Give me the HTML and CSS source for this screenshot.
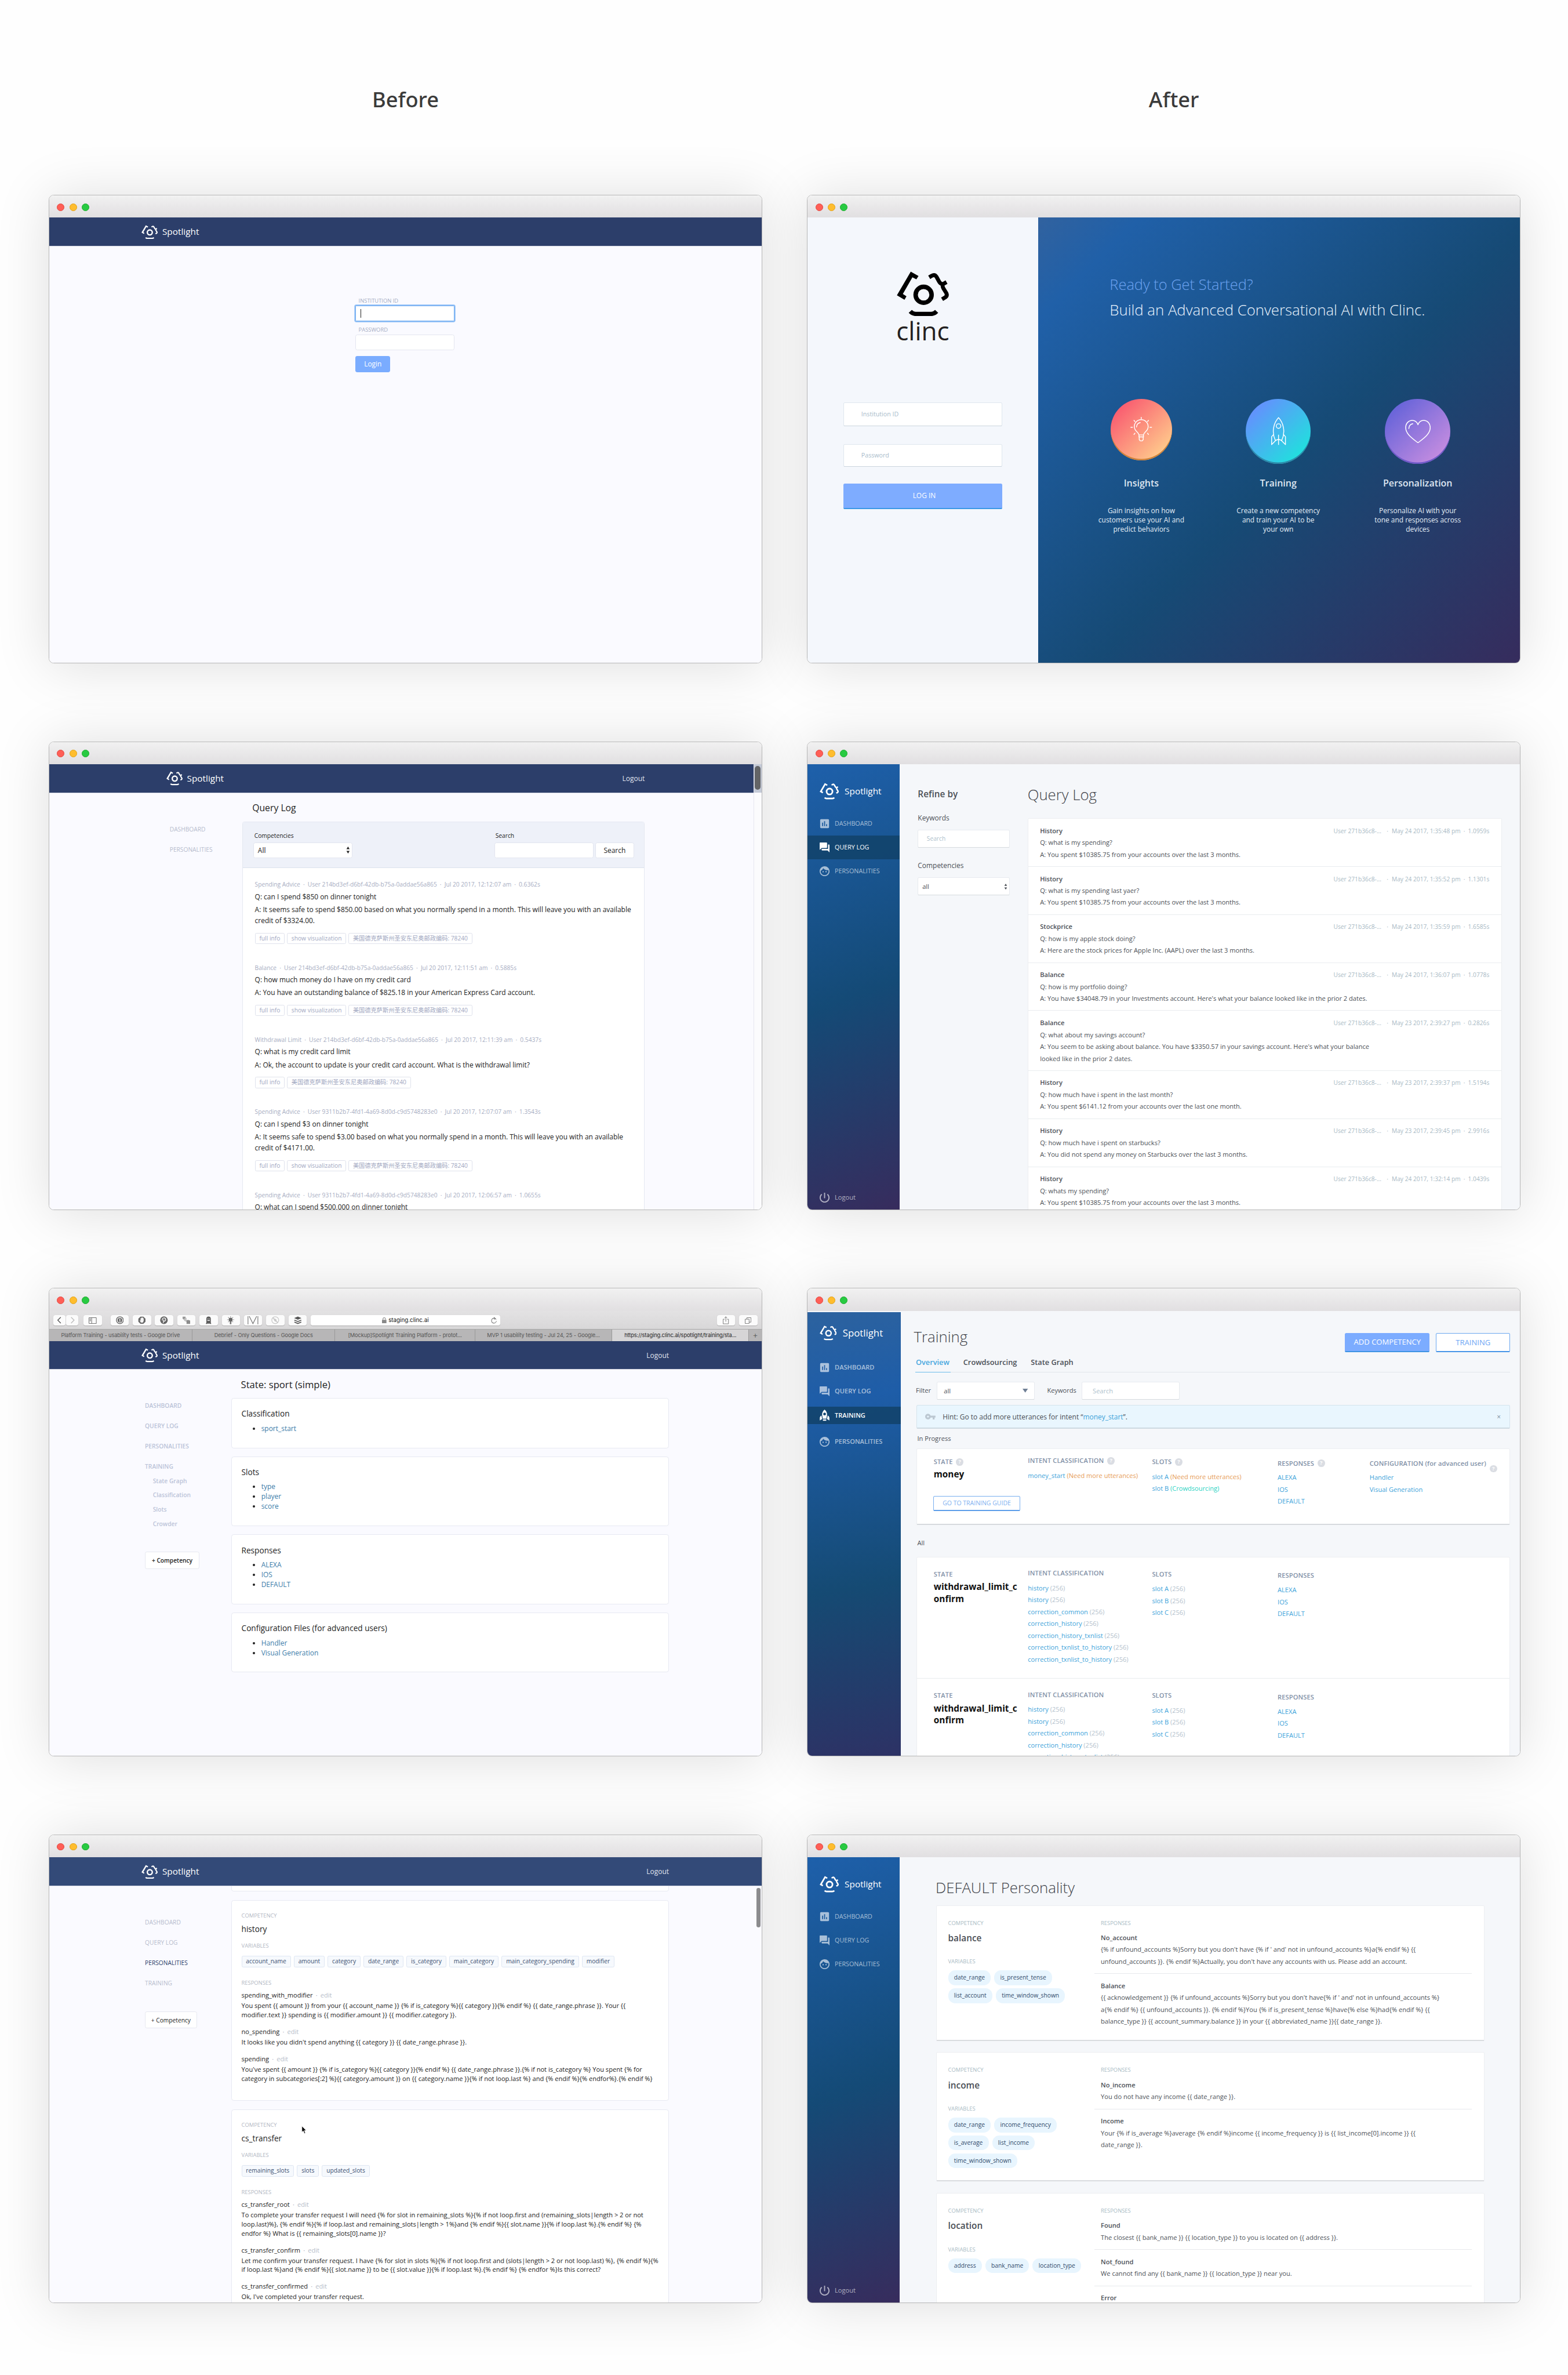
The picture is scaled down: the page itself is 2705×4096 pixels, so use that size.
FILE: index.html
```html
<!DOCTYPE html>
<html lang="en">
<head>
<meta charset="utf-8">
<title>Spotlight: Before and After</title>
<link rel="stylesheet" href="styles.css">
</head>
<body>
<svg width="0" height="0" class="defs" aria-hidden="true">
  <symbol id="mark" viewBox="100 85 318 273">
    <path fill="currentColor" d="M185 87L232 113L219 133L195 121L137 222L159 236L147 257L101 230Z"/>
    <g fill="none" stroke="currentColor" stroke-width="24">
      <path d="M297 121L312 112Q330 102 341 118L357 147Q366 163 381 162L402 150M381 162Q374 172 384 190L401 217Q408 233 395 242L375 254"/>
      <circle cx="263" cy="227" r="48.500" stroke-width="27"/>
      <path stroke-width="26" d="M182 328Q196 343 214 343H310Q328 343 342 328"/>
    </g>
  </symbol>
  <symbol id="i-dash" viewBox="2 2 20 20"><path fill="currentColor" d="M19 3H5c-1.100 0-2 .9-2 2v14c0 1.100.9 2 2 2h14c1.100 0 2-.9 2-2V5c0-1.100-.9-2-2-2zM9 17H7v-7h2v7zm4 0h-2V7h2v10zm4 0h-2v-4h2v4z"/></symbol>
  <symbol id="i-log" viewBox="2 2 20 20"><path fill="currentColor" d="M21 6h-2v9H6v2c0 .55.45 1 1 1h11l4 4V7c0-.55-.45-1-1-1zm-4 6V3c0-.55-.45-1-1-1H3c-.55 0-1 .45-1 1v14l4-4h10c.55 0 1-.45 1-1z"/></symbol>
  <symbol id="i-face" viewBox="2 2 20 20"><path fill="currentColor" d="M9 11.750c-.69 0-1.250.56-1.250 1.250s.56 1.250 1.250 1.250 1.250-.56 1.250-1.250-.56-1.250-1.250-1.250zm6 0c-.69 0-1.250.56-1.250 1.250s.56 1.250 1.250 1.250 1.250-.56 1.250-1.250-.56-1.250-1.250-1.250zM12 2C6.480 2 2 6.480 2 12s4.480 10 10 10 10-4.480 10-10S17.520 2 12 2zm0 18c-4.410 0-8-3.590-8-8 0-.29.02-.58.05-.86 2.360-1.050 4.230-2.980 5.210-5.370C11.070 8.330 14.050 10 17.420 10c.78 0 1.530-.09 2.250-.26.21.71.33 1.470.33 2.260 0 4.410-3.590 8-8 8z"/></symbol>
  <symbol id="i-power" viewBox="3 3 18 18"><path fill="currentColor" d="M13 3h-2v10h2V3zm4.830 2.170l-1.420 1.420C17.990 7.860 19 9.810 19 12c0 3.870-3.130 7-7 7s-7-3.130-7-7c0-2.190 1.010-4.140 2.580-5.420L6.170 5.170C4.230 6.820 3 9.260 3 12c0 4.970 4.030 9 9 9s9-4.030 9-9c0-2.740-1.230-5.180-3.170-6.830z"/></symbol>
  <symbol id="i-rocket" viewBox="0 0 20 23"><path fill="currentColor" fill-rule="evenodd" d="M10 0C13.500 2.500 15.500 7 15 11.500L13.500 18.500H6.500L5 11.500C4.500 7 6.500 2.500 10 0ZM10 6.200a2.800 2.800 0 1 0 0 5.600a2.800 2.800 0 1 0 0-5.600ZM3.600 12L5.200 19L.3 22V16.500Q.5 13.500 3.600 12ZM16.400 12L14.800 19L19.700 22V16.500Q19.500 13.500 16.400 12ZM6.600 20H13.400V22.800H6.600Z"/></symbol>
  <symbol id="i-key" viewBox="1 6 22 12"><path fill="currentColor" d="M12.650 10C11.830 7.670 9.610 6 7 6c-3.310 0-6 2.690-6 6s2.690 6 6 6c2.610 0 4.830-1.670 5.650-4H17v4h4v-4h2v-4H12.650zM7 14c-1.100 0-2-.9-2-2s.9-2 2-2 2 .9 2 2-.9 2-2 2z"/></symbol>
  <symbol id="i-updown" viewBox="0 0 8 14"><path fill="currentColor" d="M4 0L7.200 5.200H.8ZM4 14L.8 8.800H7.200Z"/></symbol>
</svg>

<main class="board">
  <div class="heads"><h1>Before</h1><h1>After</h1></div>
  <div class="windows">

    <!-- Login, before -->
    <section class="win">
      <div class="bar"><i></i><i></i><i></i></div>
      <div class="page legacy">
        <header class="top"><svg class="mark"><use href="#mark"/></svg><span class="brand">Spotlight</span></header>
        <form class="old-login">
          <label>INSTITUTION ID</label>
          <div class="field focus"><b></b></div>
          <label>PASSWORD</label>
          <div class="field"></div>
          <div class="btn">Login</div>
        </form>
      </div>
    </section>

    <!-- Login, after -->
    <section class="win">
      <div class="bar"><i></i><i></i><i></i></div>
      <div class="page split">
        <div class="signin">
          <svg class="logo"><use href="#mark"/></svg>
          <div class="wordmark">clinc</div>
          <div class="inp a">Institution ID</div>
          <div class="inp b">Password</div>
          <div class="go">LOG IN</div>
        </div>
        <div class="hero">
          <p class="ready">Ready to Get Started?</p>
          <p class="build">Build an Advanced Conversational AI with Clinc.</p>
          <div class="feats">
            <div class="feat">
              <div class="disc"><div class="orb sun">
                <svg width="44" height="52" viewBox="0 0 44 52" fill="none" stroke="#fff" stroke-width="1.700" stroke-linecap="round"><path d="M17.500 36.500C17 31 8 29 8 19.500a14 14 0 0 1 28 0C36 29 27 31 26.500 36.500ZM17.500 36.500V40.500H26.500V36.500M18 40.500V46L20 48.500H24L26 46V40.500M12.500 20.500Q13 13 20 11.500M22 .9V4.200M1 21H4.300M39.700 21H43M7.300 7L9.300 9.300M36.700 7L34.700 9.300M7.300 35.500L9.300 33M36.700 35.500L34.700 33"/></svg>
              </div></div>
              <h3>Insights</h3>
              <p>Gain insights on how<br>customers use your AI and<br>predict behaviors</p>
            </div>
            <div class="feat">
              <div class="disc"><div class="orb sea">
                <svg width="32" height="58" viewBox="0 0 32 58" fill="none" stroke="#fff" stroke-width="1.700" stroke-linejoin="round"><path d="M16 1.500C25 11 31 29 22.500 47.500L16 45.500L9.500 47.500C1 29 7 11 16 1.500ZM5.500 36L2 40V56L11 47M26.500 36L30 40V56L21 47M16 36V56.500"/><circle cx="16" cy="18.500" r="4.600"/></svg>
              </div></div>
              <h3>Training</h3>
              <p>Create a new competency<br>and train your AI to be<br>your own</p>
            </div>
            <div class="feat">
              <div class="disc"><div class="orb dusk">
                <svg width="52" height="48" viewBox="0 0 52 48" fill="none" stroke="#fff" stroke-width="1.800" stroke-linecap="round" stroke-linejoin="round"><path d="M26 46.500C15 38 1.200 29 1.200 15.500C1.200 7 7.500 1.200 14.500 1.200C20 1.200 24 4.500 26 10C28 4.500 32 1.200 37.500 1.200C44.500 1.200 50.800 7 50.800 15.500C50.800 29 37 38 26 46.500ZM7.500 17.500Q8 9.500 15.500 8"/></svg>
              </div></div>
              <h3>Personalization</h3>
              <p>Personalize AI with your<br>tone and responses across<br>devices</p>
            </div>
          </div>
        </div>
      </div>
    </section>

    <!-- Query log, before -->
    <section class="win">
      <div class="bar"><i></i><i></i><i></i></div>
      <div class="page legacy scrolls">
        <div class="viewport">
          <header class="top inset"><svg class="mark"><use href="#mark"/></svg><span class="brand">Spotlight</span><span class="out">Logout</span></header>
          <div class="cols inset">
            <nav class="side"><a>DASHBOARD</a><a>PERSONALITIES</a></nav>
            <div class="main ql">
              <h2>Query Log</h2>
              <div class="panel">
                <div class="filters">
                  <div><label>Competencies</label><div class="box sel">All<svg width="8" height="14"><use href="#i-updown"/></svg></div></div>
                  <div><label>Search</label><div class="pair"><div class="box"></div><div class="box sb">Search</div></div></div>
                </div>
                <div class="entries">
                  <article><p class="meta">Spending Advice<i>·</i>User 214bd3ef-d6bf-42db-b75a-0addae56a865<i>·</i>Jul 20 2017, 12:12:07 am<i>·</i>0.6362s</p><p>Q: can I spend $850 on dinner tonight</p><p class="ans">A: It seems safe to spend $850.00 based on what you normally spend in a month. This will leave you with an available<br>credit of $3324.00.</p><div class="tags"><span>full info</span><span>show visualization</span><span>美国德克萨斯州圣安东尼奥邮政编码: 78240</span></div></article>
                  <article><p class="meta">Balance<i>·</i>User 214bd3ef-d6bf-42db-b75a-0addae56a865<i>·</i>Jul 20 2017, 12:11:51 am<i>·</i>0.5885s</p><p>Q: how much money do I have on my credit card</p><p class="ans">A: You have an outstanding balance of $825.18 in your American Express Card account.</p><div class="tags"><span>full info</span><span>show visualization</span><span>美国德克萨斯州圣安东尼奥邮政编码: 78240</span></div></article>
                  <article><p class="meta">Withdrawal Limit<i>·</i>User 214bd3ef-d6bf-42db-b75a-0addae56a865<i>·</i>Jul 20 2017, 12:11:39 am<i>·</i>0.5437s</p><p>Q: what is my credit card limit</p><p class="ans">A: Ok, the account to update is your credit card account. What is the withdrawal limit?</p><div class="tags"><span>full info</span><span>美国德克萨斯州圣安东尼奥邮政编码: 78240</span></div></article>
                  <article><p class="meta">Spending Advice<i>·</i>User 9311b2b7-4fd1-4a69-8d0d-c9d5748283e0<i>·</i>Jul 20 2017, 12:07:07 am<i>·</i>1.3543s</p><p>Q: can I spend $3 on dinner tonight</p><p class="ans">A: It seems safe to spend $3.00 based on what you normally spend in a month. This will leave you with an available<br>credit of $4171.00.</p><div class="tags"><span>full info</span><span>show visualization</span><span>美国德克萨斯州圣安东尼奥邮政编码: 78240</span></div></article>
                  <article><p class="meta">Spending Advice<i>·</i>User 9311b2b7-4fd1-4a69-8d0d-c9d5748283e0<i>·</i>Jul 20 2017, 12:06:57 am<i>·</i>1.0655s</p><p>Q: what can I spend $500,000 on dinner tonight</p></article>
                </div>
              </div>
            </div>
          </div>
        </div>
        <div class="track"><b></b></div>
      </div>
    </section>

    <!-- Query log, after -->
    <section class="win">
      <div class="bar"><i></i><i></i><i></i></div>
      <div class="page modern">
        <nav class="rail">
          <div class="id"><svg class="mark"><use href="#mark"/></svg><span>Spotlight</span></div>
          <a><svg><use href="#i-dash"/></svg>DASHBOARD</a>
          <a class="on"><svg><use href="#i-log"/></svg>QUERY LOG</a>
          <a><svg><use href="#i-face"/></svg>PERSONALITIES</a>
          <a class="bye"><svg><use href="#i-power"/></svg>Logout</a>
        </nav>
        <aside class="refine">
          <h3>Refine by</h3>
          <label>Keywords</label><div class="ctl ph">Search</div>
          <label>Competencies</label><div class="ctl sel">all<svg width="7" height="12"><use href="#i-updown"/></svg></div>
        </aside>
        <div class="log">
          <h2>Query Log</h2>
          <div class="sheet">
            <div class="row"><div><b>History</b><br>Q: what is my spending?<br>A: You spent $10385.75 from your accounts over the last 3 months.</div><span>User 271b36c8-...<i>·</i>May 24 2017, 1:35:48 pm<em>·</em>1.0959s</span></div>
            <div class="row"><div><b>History</b><br>Q: what is my spending last yaer?<br>A: You spent $10385.75 from your accounts over the last 3 months.</div><span>User 271b36c8-...<i>·</i>May 24 2017, 1:35:52 pm<em>·</em>1.1301s</span></div>
            <div class="row"><div><b>Stockprice</b><br>Q: how is my apple stock doing?<br>A: Here are the stock prices for Apple Inc. (AAPL) over the last 3 months.</div><span>User 271b36c8-...<i>·</i>May 24 2017, 1:35:59 pm<em>·</em>1.6585s</span></div>
            <div class="row"><div><b>Balance</b><br>Q: how is my portfolio doing?<br>A: You have $34048.79 in your Investments account. Here's what your balance looked like in the prior 2 dates.</div><span>User 271b36c8-...<i>·</i>May 24 2017, 1:36:07 pm<em>·</em>1.0778s</span></div>
            <div class="row"><div><b>Balance</b><br>Q: what about my savings account?<br>A: You seem to be asking about balance. You have $3350.57 in your savings account. Here's what your balance<br>looked like in the prior 2 dates.</div><span>User 271b36c8-...<i>·</i>May 23 2017, 2:39:27 pm<em>·</em>0.2826s</span></div>
            <div class="row"><div><b>History</b><br>Q: how much have i spent in the last month?<br>A: You spent $6141.12 from your accounts over the last one month.</div><span>User 271b36c8-...<i>·</i>May 23 2017, 2:39:37 pm<em>·</em>1.5194s</span></div>
            <div class="row"><div><b>History</b><br>Q: how much have i spent on starbucks?<br>A: You did not spend any money on Starbucks over the last 3 months.</div><span>User 271b36c8-...<i>·</i>May 23 2017, 2:39:45 pm<em>·</em>2.9916s</span></div>
            <div class="row"><div><b>History</b><br>Q: whats my spending?<br>A: You spent $10385.75 from your accounts over the last 3 months.</div><span>User 271b36c8-...<i>·</i>May 24 2017, 1:32:14 pm<em>·</em>1.0439s</span></div>
          </div>
        </div>
      </div>
    </section>

    <!-- State detail, before -->
    <section class="win">
      <div class="bar"><i></i><i></i><i></i></div>
      <div class="safari">
        <div class="tool">
          <div class="k nav"><svg width="10" height="14" viewBox="0 0 10 14"><path d="M8 1L2 7L8 13" fill="none" stroke="#555" stroke-width="1.600"/></svg></div>
          <div class="k nav"><svg width="10" height="14" viewBox="0 0 10 14"><path d="M2 1L8 7L2 13" fill="none" stroke="#bbb" stroke-width="1.600"/></svg></div>
          <div class="k sb"><svg width="16" height="13" viewBox="0 0 16 13"><path d="M.6 .6H15.400V12.400H.6ZM6 .6V12.400M2 3H4.500M2 5H4.500M2 7H4.500" fill="none" stroke="#666" stroke-width="1.100"/></svg></div>
          <div class="k"><svg viewBox="0 0 16 16"><circle cx="8" cy="8" r="7" fill="none" stroke="#666" stroke-width="1.600"/><circle cx="8" cy="8" r="4.600" fill="#666"/><path d="M8 5V11M7 5.600H8M8 10.600H9" stroke="#fff" stroke-width="1.500"/></svg></div>
          <div class="k"><svg viewBox="0 0 16 16"><path d="M5 .8H11L15.200 5V11L11 15.200H5L.8 11V5Z" fill="#666"/><path d="M5.200 4V9L4 8.200L3.600 9.200L6 12.800H10L11.600 9.500V4.500H10.600V3H9V2.500H7.500V3.300H6.400V4Z" fill="#f4f4f4"/></svg></div>
          <div class="k"><svg viewBox="0 0 16 16"><circle cx="8" cy="8" r="7.700" fill="#666"/><path d="M6.500 13.500L8 6.500M5.200 8.800C3.500 5.500 6 3.400 8.200 3.400C12.500 3.400 12.500 10 8.800 10C7.800 10 7.200 9.300 7.200 9" fill="none" stroke="#fff" stroke-width="1.500"/></svg></div>
          <div class="k"><svg viewBox="0 0 16 16"><path d="M0 1H6V6L4 8L0 5Z" fill="#999"/><path d="M3 5L8 3V9L13 12H9L3 9Z" fill="#c2c2c2"/><path d="M8 8L12 7.500L16 9V15.500H8Z" fill="#8c8c8c"/></svg></div>
          <div class="k"><svg viewBox="0 0 16 16"><path d="M3.500 13V5A4.500 4.500 0 0 1 12.500 5V13L13.500 15.500H10.500L9.500 14.500L8 15.500L6.500 14.500L5.500 15.500H2.500Z" fill="#5d5d5d"/><path d="M6 4.800H7.200V6.300H6ZM8.800 4.800H10V6.300H8.800ZM5.500 8H10.500V9.400H5.500Z" fill="#fff"/></svg></div>
          <div class="k"><svg viewBox="0 0 16 16"><circle cx="8" cy="7" r="4" fill="#666"/><path d="M6.500 10H9.500V16H6.500Z" fill="#777"/><path d="M8 0V2M1 7H3M13 7H15M3 2L4.500 3.500M13 2L11.500 3.500M3 12L4.500 10.500M13 12L11.500 10.500" stroke="#888" stroke-width="1.200"/></svg></div>
          <div class="k"><svg width="22" height="17" viewBox="0 0 22 17" class="wide"><path d="M1 17V0M21 17V0M3.500 0L11 15L18.500 0" fill="none" stroke="#666" stroke-width="1.200"/></svg></div>
          <div class="k"><svg viewBox="0 0 16 16"><circle cx="8" cy="8" r="7" fill="none" stroke="#ccc" stroke-width="1.600"/><path d="M3 3L13 13" stroke="#c4c4c4" stroke-width="1.600"/><path d="M5 5Q9 4 11 8L9 11Q5 10 5 5Z" fill="#c9c9c9"/></svg></div>
          <div class="k"><svg viewBox="0 0 16 16"><path d="M8 .5L15.500 3.800L8 7L.5 3.800Z" fill="#555"/><path d="M1 7.800L8 10.800L15 7.800M1 11.800L8 14.800L15 11.800" fill="none" stroke="#555" stroke-width="1.900"/></svg></div>
          <div class="addr"><svg width="9" height="12" viewBox="0 0 9 12"><path d="M0 5H9V12H0Z" fill="#888"/><path d="M2 5V3.200A2.500 2.500 0 0 1 7 3.200V5" fill="none" stroke="#888" stroke-width="1.200"/></svg><span>staging.clinc.ai</span><svg class="reload" width="12" height="14" viewBox="0 0 12 14"><path d="M10.500 5.500A5 5 0 1 0 11 8.500M6 1L9 3.500L6 5.500" fill="none" stroke="#777" stroke-width="1.200"/></svg></div>
          <div class="k sh"><svg width="12" height="16" viewBox="0 0 12 16" class="wide"><path d="M3.500 6H.6V15.400H11.400V6H8.500M6 11V1M3.500 3.500L6 1L8.500 3.500" fill="none" stroke="#777" stroke-width="1.100"/></svg></div>
          <div class="k"><svg width="13" height="13" viewBox="0 0 13 13" class="wide"><path d="M.6 3.600H8.600V12.400H.6ZM4 3.600V.6H12.400V9.600H8.600" fill="none" stroke="#777" stroke-width="1.100"/></svg></div>
        </div>
        <div class="tabs"><span>Platform Training - usability tests - Google Drive</span><span>Debrief - Only Questions - Google Docs</span><span>[Mockup]Spotlight Training Platform - protot...</span><span>MVP 1 usability testing - Jul 24, 25 - Google...</span><span class="on">https://staging.clinc.ai/spotlight/training/sta...</span><span class="plus">+</span></div>
      </div>
      <div class="page legacy">
        <header class="top"><svg class="mark"><use href="#mark"/></svg><span class="brand">Spotlight</span><span class="out">Logout</span></header>
        <div class="cols">
          <nav class="side semi"><a>DASHBOARD</a><a>QUERY LOG</a><a>PERSONALITIES</a><a>TRAINING</a><a class="sub">State Graph</a><a class="sub">Classification</a><a class="sub">Slots</a><a class="sub">Crowder</a><div class="add">+ Competency</div></nav>
          <div class="main state">
            <h2>State: sport (simple)</h2>
            <div class="card"><h3>Classification</h3><ul><li><a>sport_start</a></li></ul></div>
            <div class="card"><h3>Slots</h3><ul><li><a>type</a></li><li><a>player</a></li><li><a>score</a></li></ul></div>
            <div class="card"><h3>Responses</h3><ul><li><a>ALEXA</a></li><li><a>IOS</a></li><li><a>DEFAULT</a></li></ul></div>
            <div class="card"><h3>Configuration Files (for advanced users)</h3><ul><li><a>Handler</a></li><li><a>Visual Generation</a></li></ul></div>
          </div>
        </div>
      </div>
    </section>

    <!-- Training, after -->
    <section class="win">
      <div class="bar"><i></i><i></i><i></i></div>
      <div class="page modern tr">
        <nav class="rail">
          <div class="id"><svg class="mark"><use href="#mark"/></svg><span>Spotlight</span></div>
          <a><svg><use href="#i-dash"/></svg>DASHBOARD</a>
          <a><svg><use href="#i-log"/></svg>QUERY LOG</a>
          <a class="on"><svg><use href="#i-rocket"/></svg>TRAINING</a>
          <a><svg><use href="#i-face"/></svg>PERSONALITIES</a>
        </nav>
        <div class="train">
          <div class="hd"><h2>Training</h2><div class="btns"><span class="fill">ADD COMPETENCY</span><span class="line">TRAINING</span></div></div>
          <div class="tabline"><span class="on">Overview</span><span>Crowdsourcing</span><span>State Graph</span></div>
          <div class="fl"><label>Filter</label><div class="ctl">all<svg width="11" height="8" viewBox="0 0 11 8"><path d="M0 0H11L5.500 8Z" fill="#6f7f95"/></svg></div><label>Keywords</label><div class="ctl ph">Search</div></div>
          <div class="hint"><svg width="21" height="12"><use href="#i-key"/></svg><span>Hint: Go to add more utterances for intent “<a>money_start</a>”.</span><b>×</b></div>
          <p class="cap">In Progress</p>
          <div class="sheet one">
            <div class="st">
              <div class="c1"><h4>STATE<i>?</i></h4><strong>money</strong><span class="guide">GO TO TRAINING GUIDE</span></div>
              <div class="c2"><h4>INTENT CLASSIFICATION<i>?</i></h4><p><a>money_start</a> <u>(Need more utterances)</u></p></div>
              <div class="c3"><h4>SLOTS<i>?</i></h4><p><a>slot A</a> <u>(Need more utterances)</u></p><p><a>slot B</a> <s>(Crowdsourcing)</s></p></div>
              <div class="c4"><h4>RESPONSES<i>?</i></h4><p><a>ALEXA</a></p><p><a>IOS</a></p><p><a>DEFAULT</a></p></div>
              <div class="c5"><h4>CONFIGURATION (for advanced user)<i>?</i></h4><p><a>Handler</a></p><p><a>Visual Generation</a></p></div>
            </div>
          </div>
          <p class="cap all">All</p>
          <div class="sheet">
            <div class="st many">
              <div class="c1"><h4>STATE</h4><strong>withdrawal_limit_c<br>onfirm</strong></div>
              <div class="c2"><h4>INTENT CLASSIFICATION</h4><p><a>history</a> (256)</p><p><a>history</a> (256)</p><p><a>correction_common</a> (256)</p><p><a>correction_history</a> (256)</p><p><a>correction_history_txnlist</a> (256)</p><p><a>correction_txnlist_to_history</a> (256)</p><p><a>correction_txnlist_to_history</a> (256)</p></div>
              <div class="c3"><h4>SLOTS</h4><p><a>slot A</a> (256)</p><p><a>slot B</a> (256)</p><p><a>slot C</a> (256)</p></div>
              <div class="c4"><h4>RESPONSES</h4><p><a>ALEXA</a></p><p><a>IOS</a></p><p><a>DEFAULT</a></p></div>
            </div>
            <div class="st many">
              <div class="c1"><h4>STATE</h4><strong>withdrawal_limit_c<br>onfirm</strong></div>
              <div class="c2"><h4>INTENT CLASSIFICATION</h4><p><a>history</a> (256)</p><p><a>history</a> (256)</p><p><a>correction_common</a> (256)</p><p><a>correction_history</a> (256)</p><p><a>correction_history_txnlist</a> (256)</p></div>
              <div class="c3"><h4>SLOTS</h4><p><a>slot A</a> (256)</p><p><a>slot B</a> (256)</p><p><a>slot C</a> (256)</p></div>
              <div class="c4"><h4>RESPONSES</h4><p><a>ALEXA</a></p><p><a>IOS</a></p><p><a>DEFAULT</a></p></div>
            </div>
          </div>
        </div>
      </div>
    </section>

    <!-- Personalities, before -->
    <section class="win">
      <div class="bar"><i></i><i></i><i></i></div>
      <div class="page legacy pers">
        <header class="top"><svg class="mark"><use href="#mark"/></svg><span class="brand">Spotlight</span><span class="out">Logout</span></header>
        <div class="cols">
          <nav class="side"><a>DASHBOARD</a><a>QUERY LOG</a><a class="on">PERSONALITIES</a><a>TRAINING</a><div class="add">+ Competency</div></nav>
          <div class="main comp">
            <div class="card stub"></div>
            <div class="card">
              <h5>COMPETENCY</h5><h3>history</h3>
              <h5>VARIABLES</h5><div class="vars"><span>account_name</span><span>amount</span><span>category</span><span>date_range</span><span>is_category</span><span>main_category</span><span>main_category_spending</span><span>modifier</span></div>
              <h5>RESPONSES</h5>
              <dl>
                <dt>spending_with_modifier<i>·</i><em>edit</em></dt><dd>You spent {{ amount }} from your {{ account_name }} {% if is_category %}{{ category }}{% endif %} {{ date_range.phrase }}. Your {{<br>modifier.text }} spending is {{ modifier.amount }} {{ modifier.category }}.</dd>
                <dt>no_spending<i>·</i><em>edit</em></dt><dd>It looks like you didn't spend anything {{ category }} {{ date_range.phrase }}.</dd>
                <dt>spending<i>·</i><em>edit</em></dt><dd>You've spent {{ amount }} {% if is_category %}{{ category }}{% endif %} {{ date_range.phrase }}.{% if not is_category %} You spent {% for<br>category in subcategories[:2] %}{{ category.amount }} on {{ category.name }}{% if not loop.last %} and {% endif %}{% endfor%}.{% endif %}</dd>
              </dl>
            </div>
            <div class="card">
              <h5>COMPETENCY</h5><h3>cs_transfer</h3>
              <h5>VARIABLES</h5><div class="vars"><span>remaining_slots</span><span>slots</span><span>updated_slots</span></div>
              <h5>RESPONSES</h5>
              <dl>
                <dt>cs_transfer_root<i>·</i><em>edit</em></dt><dd>To complete your transfer request I will need {% for slot in remaining_slots %}{% if not loop.first and (remaining_slots|length &gt; 2 or not<br>loop.last)%}, {% endif %}{% if loop.last and remaining_slots|length &gt; 1%}and {% endif %}{{ slot.name }}{% if loop.last %}.{% endif %} {%<br>endfor %} What is {{ remaining_slots[0].name }}?</dd>
                <dt>cs_transfer_confirm<i>·</i><em>edit</em></dt><dd>Let me confirm your transfer request. I have {% for slot in slots %}{% if not loop.first and (slots|length &gt; 2 or not loop.last) %}, {% endif %}{%<br>if loop.last %}and {% endif %}{{ slot.name }} to be {{ slot.value }}{% if loop.last %}.{% endif %} {% endfor %}Is this correct?</dd>
                <dt>cs_transfer_confirmed<i>·</i><em>edit</em></dt><dd>Ok, I've completed your transfer request.</dd>
              </dl>
            </div>
          </div>
        </div>
        <div class="thumb"></div>
        <svg class="cursor" width="11" height="17" viewBox="0 0 11 17"><path d="M1 1V13L3.800 10.500L6 15.800L8 15L5.800 9.800H9.600Z" fill="#000" stroke="#fff" stroke-width=".8"/></svg>
      </div>
    </section>

    <!-- Personalities, after -->
    <section class="win">
      <div class="bar"><i></i><i></i><i></i></div>
      <div class="page modern">
        <nav class="rail">
          <div class="id"><svg class="mark"><use href="#mark"/></svg><span>Spotlight</span></div>
          <a><svg><use href="#i-dash"/></svg>DASHBOARD</a>
          <a><svg><use href="#i-log"/></svg>QUERY LOG</a>
          <a><svg><use href="#i-face"/></svg>PERSONALITIES</a>
          <a class="bye"><svg><use href="#i-power"/></svg>Logout</a>
        </nav>
        <div class="persona">
          <h2>DEFAULT Personality</h2>
          <div class="pc">
            <div class="l"><h5>COMPETENCY</h5><h3>balance</h3><h5>VARIABLES</h5><div class="pills"><span>date_range</span><span>is_present_tense</span><span>list_account</span><span>time_window_shown</span></div></div>
            <div class="r"><h5>RESPONSES</h5>
              <p><b>No_account</b><br>{% if unfound_accounts %}Sorry but you don't have {% if ' and' not in unfound_accounts %}a{% endif %} {{<br>unfound_accounts }}. {% endif %}Actually, you don't have any accounts with us. Please add an account.</p>
              <p><b>Balance</b><br>{{ acknowledgement }} {% if unfound_accounts %}Sorry but you don't have{% if ' and' not in unfound_accounts %}<br>a{% endif %} {{ unfound_accounts }}. {% endif %}You {% if is_present_tense %}have{% else %}had{% endif %} {{<br>balance_type }} {{ account_summary.balance }} in your {{ abbreviated_name }}{{ date_range }}.</p></div>
          </div>
          <div class="pc">
            <div class="l"><h5>COMPETENCY</h5><h3>income</h3><h5>VARIABLES</h5><div class="pills"><span>date_range</span><span>income_frequency</span><span>is_average</span><span>list_income</span><span>time_window_shown</span></div></div>
            <div class="r"><h5>RESPONSES</h5>
              <p><b>No_income</b><br>You do not have any income {{ date_range }}.</p>
              <p><b>Income</b><br>Your {% if is_average %}average {% endif %}income {{ income_frequency }} is {{ list_income[0].income }} {{<br>date_range }}.</p></div>
          </div>
          <div class="pc">
            <div class="l"><h5>COMPETENCY</h5><h3>location</h3><h5>VARIABLES</h5><div class="pills"><span>address</span><span>bank_name</span><span>location_type</span></div></div>
            <div class="r"><h5>RESPONSES</h5>
              <p><b>Found</b><br>The closest {{ bank_name }} {{ location_type }} to you is located on {{ address }}.</p>
              <p><b>Not_found</b><br>We cannot find any {{ bank_name }} {{ location_type }} near you.</p>
              <p><b>Error</b></p></div>
          </div>
        </div>
      </div>
    </section>

  </div>
</main>
</body>
</html>
```
FILE: styles.css
```css
* { box-sizing: border-box; }
html, body { margin: 0; padding: 0; overflow: hidden; background: #fefefe; }
body { height: 4096px; }
h1, h2, h3, h4, h5, p, ul, dl, dd { margin: 0; padding: 0; font-weight: 400; }
i, em, u, s { font-style: normal; text-decoration: none; }
b { font-weight: 600; }
.defs { display: block; }
svg { display: block; flex: none; }

.board {
  zoom: .85304;
  width: 3171px; height: 4802px; overflow: hidden;
  background: #fefefe; color: #222;
  font: 14px/22px "Open Sans", "Noto Sans CJK SC", sans-serif;
  white-space: nowrap;
}
.heads { display: flex; height: 394px; padding: 171px 0 0 99px; gap: 112px; }
.heads h1 { width: 1442px; text-align: center; font: 500 42.500px/60px "Noto Sans", sans-serif; color: #3b3b3b; }
.windows {
  display: grid; grid-template-columns: 1443px 1443px; grid-auto-rows: 947px;
  column-gap: 91px; row-gap: 158px; padding-left: 98px;
}
.win {
  display: flex; flex-direction: column; overflow: hidden;
  border: 1px solid #b6b6b6; border-radius: 10px;
  box-shadow: 0 4px 110px rgba(0,0,0,.13);
}
.bar {
  flex: none; height: 45px; padding: 16px 0 0 16px; display: flex; gap: 9.800px;
  background: linear-gradient(#f1f1f1, #e1dfe1); box-shadow: inset 0 1px #f8f8f8;
}
.bar i { width: 15.200px; height: 15.200px; border-radius: 50%; background: #ff5f57; border: 1px solid #e2463f; }
.bar i:nth-child(2) { background: #ffbd2e; border-color: #e1a116; }
.bar i:nth-child(3) { background: #28ca42; border-color: #1bac2c; }
.page { flex: 1; min-height: 0; overflow: hidden; position: relative; }

/* Old interface */
.legacy { background: #fafaff; }
.top {
  display: flex; align-items: center; height: 58px; padding: 0 187px;
  background: #2c3e6a; border-bottom: 1.500px solid #d3d6e0; color: #fff;
}
.top .mark { width: 33px; height: 29px; margin-top: 1px; }
.brand { margin-left: 9px; font-size: 18px; }
.out { margin-left: auto; color: #e0e5ef; }
.top.inset { padding: 0 220px 0 237px; }
.cols { display: flex; padding-left: 194px; }
.cols.inset { padding-left: 244px; }
.side { width: 174px; padding-top: 53px; font-size: 12px; line-height: 41px; color: #b7bccd; }
.cols.inset .side { width: 147px; }
.side a { display: block; }
.side.semi { font-weight: 600; color: #bac3d8; }
.side .sub { padding-left: 16px; line-height: 29px; }
.side .sub:nth-of-type(5) { margin-top: -6.500px; }
.side .on { color: #2c3e6a; }
.add {
  width: 105px; height: 35px; margin-top: 36px; text-align: center; line-height: 33px; color: #222;
  background: #fff; border: 1px solid #e6e8f0; border-radius: 4px;
}
.semi .add { width: 110px; margin-top: 42px; }
.card { background: #fff; border: 1px solid #e7e9f2; border-radius: 5px; }

.old-login { width: 200px; margin: 102px 0 0 620px; }
.old-login label { display: block; padding-left: 6px; font-size: 11px; line-height: 16px; color: #a6adc3; }
.field { height: 32px; margin: 1.500px 0 9px; background: #fff; border: 1px solid #e4e6f0; border-radius: 4px; }
.field.focus { border-color: #6ea9ee; box-shadow: 0 0 0 2px #8fbff7; border-radius: 2px; padding: 6px 0 0 9px; }
.field.focus b { display: block; width: 1px; height: 18px; background: #222; }
.btn { width: 70px; height: 32px; margin-top: 12px; background: #7aacff; border-radius: 4px; color: #fff; text-align: center; line-height: 32px; }

.scrolls { display: flex; }
.viewport { flex: 1; overflow: hidden; }
.track { width: 16px; background: linear-gradient(#c4cad7 57px, #fbfbfd 57px); border-left: 1px solid #e6e6ee; padding: 3px 0 0 1.500px; }
.track b { display: block; width: 11px; height: 48px; border-radius: 6px; background: #636466; }

.ql { width: 814px; }
.ql h2, .state h2 { padding-left: 20px; font-size: 18.500px; line-height: 30px; }
.ql h2 { margin: 16px 0 11.500px; }
.panel { background: #fff; border: 1px solid #e5e8f1; border-radius: 4px; height: 1000px; }
.filters { display: flex; justify-content: space-between; height: 93px; padding: 18px 21px 0; background: #eef1f9; border-bottom: 1.500px solid #dbe2ec; }
.filters label { display: block; font-size: 12px; line-height: 20px; margin-bottom: 3px; padding-left: 2px; }
.pair { display: flex; gap: 4px; }
.box { width: 200px; height: 32px; background: #fff; border: 1px solid #e2e5ef; border-radius: 4px; padding: 0 3px 0 8px; display: flex; align-items: center; justify-content: space-between; }
.box.sb { width: 78px; padding: 0; justify-content: center; }
.entries { padding: 24px 0 0 24px; }
.entries article { margin-bottom: 38.300px; }
.entries p { line-height: 22.400px; margin-bottom: 3.600px; }
.entries .meta { font-size: 12px; line-height: 20px; margin-bottom: 2.600px; color: #a7adc2; }
.meta i { margin: 0 6px; }
.entries .ans { margin-bottom: 13.500px; }
.tags { display: flex; gap: 4.500px; }
.tags span { height: 23px; padding: 0 8px; line-height: 21px; font-size: 12px; color: #a1a7bf; border: 1px solid #dfe2ec; border-radius: 3px; }

.state { width: 886px; }
.state h2 { margin: 15.500px 0 12px; font-size: 19.500px; }
.state .card { padding: 19px 0 29px 20px; margin-bottom: 16.500px; }
.state h3 { font-size: 16px; line-height: 24px; margin-bottom: 7px; }
.state ul { padding-left: 40px; line-height: 20px; }
.state li::marker { color: #222; }
.state li a { color: #3d7da9; }

.pers .top { background: #334a78; }
.comp { width: 886px; }
.comp .card { padding: 22px 0 35px 20px; margin-bottom: 17.300px; color: #222; font-size: 13px; line-height: 18.200px; }
.comp .stub { height: 11px; padding: 0; border-top: 0; border-radius: 0 0 5px 5px; }
.comp h5 { font-size: 11px; line-height: 16px; color: #b3b8c3; }
.comp h3 { font-size: 16px; line-height: 24px; margin: 8px 0 13.700px; }
.vars { display: flex; gap: 6.200px; margin: 12.300px 0 23px; }
.vars span { height: 23px; padding: 0 8px; line-height: 21px; font-size: 12px; color: #3b4f70; background: #f6f9fd; border: 1px solid #dee6f2; border-radius: 3px; }
.comp dt { line-height: 20px; margin: 14.600px 0 2.500px; }
.comp dl dt:first-child { margin-top: 7px; }
.comp dt i { margin: 0 6px; color: #aab; }
.comp dt em { color: #b6bdc9; }
.thumb { position: absolute; left: 1431px; top: 62px; width: 8px; height: 80px; border-radius: 4px; background: #8b8b8e; }
.cursor { position: absolute; left: 510px; top: 542px; }

/* Browser chrome */
.safari { flex: none; font-family: Inter, sans-serif; }
.tool { display: flex; height: 37px; padding: 8.500px 8px 0 9px; background: linear-gradient(#e3e2e3, #d8d7d8); }
.k { width: 37px; height: 21.500px; margin-right: 8px; border-radius: 4px; background: #fbfbfb; box-shadow: 0 1px 1px rgba(0,0,0,.2); display: flex; align-items: center; justify-content: center; }
.k.nav { width: 24.500px; margin-right: 1.500px; }
.k.nav + .k.sb { margin: 0 17.500px 0 9px; }
.k svg { width: 16px; height: 16px; }
.k.nav svg { width: 10px; }
.k.sb svg { height: 13px; }
.k .wide { width: auto; height: auto; }
.addr { width: 383px; height: 21.500px; display: flex; align-items: center; justify-content: center; gap: 4px; background: #fff; border-radius: 4px; box-shadow: 0 1px 1px rgba(0,0,0,.2); font-size: 11.500px; color: #111; position: relative; }
.reload { position: absolute; right: 6px; }
.k.sh { margin-left: auto; }
.k.sh + .k { margin-right: 0; }
.tabs { display: grid; grid-template-columns: 290px 289px 283px 277px 277px 1fr; height: 24px; background: #b7b6b7; border-top: 1px solid #a9a9a9; font-size: 10.800px; letter-spacing: -.1px; line-height: 23px; color: #555; text-align: center; }
.tabs span { border-right: 1px solid #999; overflow: hidden; }
.tabs .on { background: #d6d5d6; color: #222; }
.tabs .plus { font-size: 17px; font-weight: 300; border: 0; }

/* New login */
.split { display: flex; }
.signin { width: 466px; background: #f4f7fc; display: flex; flex-direction: column; align-items: center; padding-top: 108px; }
.logo { width: 106px; height: 91px; color: #000; }
.wordmark { font-size: 51.500px; line-height: 51px; margin: 4.500px 0 118.500px; color: #231f20; }
.inp, .go { width: 321px; }
.inp { background: #fff; border: 1px solid #dfe7ee; border-bottom: 2px solid #ccd5de; border-radius: 3px; padding-left: 35px; font-size: 12.500px; color: #a8bbca; }
.inp.a { height: 49px; line-height: 46px; margin-bottom: 36px; }
.inp.b { height: 45px; line-height: 43px; margin-bottom: 35px; }
.go { height: 51px; background: #7eacff; border-bottom: 3px solid #3c98e6; border-radius: 3px; color: #fff; text-align: center; line-height: 49px; padding-left: 6px; }
.hero { flex: 1; background: linear-gradient(135deg, #31629f 0%, #2060a8 11%, #164a75 54%, #362c5d 100%); color: #fff; }
.ready, .build { padding-left: 145px; font-size: 30.200px; font-weight: 300; line-height: 40px; }
.ready { margin-top: 114px; color: #6ca2ef; font-size: 29.800px; }
.build { margin-top: 12px; color: #eaf3fd; }
.feats { display: flex; margin: 160px 0 0 99px; }
.feat { width: 220px; text-align: center; margin-right: 57px; }
.feat + .feat { margin-right: 62px; }
.disc { height: 132px; }
.orb { width: 132px; height: 132px; margin: 0 auto; border-radius: 50%; display: flex; align-items: center; justify-content: center; }
.sun { width: 125px; height: 125px; background: linear-gradient(135deg, #f9576f 10%, #ffcf8d 90%); box-shadow: inset 0 -3px #cf8239; }
.sea { background: linear-gradient(135deg, #678dff 10%, #1de4dc 90%); box-shadow: inset 0 -3px #2d8aa9; }
.dusk { background: linear-gradient(135deg, #6362d9 10%, #c88ee0 90%); box-shadow: inset 0 -3px #6e58c8; }
.feat h3 { font-size: 18.800px; line-height: 24px; margin: 26.500px 0 33.500px; font-weight: 600; color: #dde6f1; }
.feat p { line-height: 19px; color: #e4edf6; }

/* New interface */
.modern { display: flex; background: #f5f7fa; color: #4b4f56; font-size: 13px; line-height: 24px; }
.rail { width: 186px; flex: none; display: flex; flex-direction: column; color: rgba(255,255,255,.62); font-size: 12.600px; background: linear-gradient(160deg, #1e60ab 0%, #144a76 52%, #372c5d 100%); }
.id { display: flex; align-items: center; height: 34px; margin: 37px 0 25px 25px; color: #fff; font-size: 18px; }
.id .mark { width: 39px; height: 34px; margin-right: 11px; }
.rail a { display: flex; align-items: center; height: 48px; padding-left: 24px; }
.rail a svg { width: 20px; height: 20px; margin-right: 11px; }
.rail .on { background: rgba(18,66,105,.85); color: #fff; }
.rail .bye { margin-top: auto; font-size: 13px; }
.modern h2 { font-size: 30.200px; font-weight: 300; line-height: 40px; color: #3f4349; }
.ctl { background: #fff; border: 1px solid #e7eaef; border-bottom: 2px solid #d6dade; border-radius: 3px; height: 36px; line-height: 33px; }
.ctl.ph { color: #aebfcc; }
.sheet { background: #fff; border: 1px solid #eceef1; border-radius: 3px; }

.refine { width: 186px; margin: 0 36px 0 37px; font-size: 14px; }
.refine h3 { font-size: 18px; font-weight: 600; line-height: 24px; margin: 48px 0 24px; }
.refine label { display: block; height: 37px; }
.refine .ctl { padding-left: 17px; font-size: 12px; margin-bottom: 23px; }
.refine .sel { padding: 0 4px 0 8px; font-size: 13px; display: flex; justify-content: space-between; align-items: center; }

.log { width: 959px; padding-top: 41px; }
.log .sheet { margin-top: 28px; }
.row { display: flex; padding: 12.500px 24px 11.500px; border-bottom: 1px solid #e9ecef; }
.row div { flex: 1; width: 0; }
.row span { flex: none; font-size: 12px; color: #a8b9c4; }
.row i { margin: 0 7px 0 11px; }
.row em { margin: 0 6px; }

.tr { border-top: 3px solid #f5f7fa; }
.tr .rail { width: 189px; font-size: 13px; font-weight: 600; background: linear-gradient(172deg, #2c629f 0%, #1e5da8 20%, #154a73 62%, #2d3265 100%); }
.tr .id { height: 30px; margin: 27.500px 0 30.500px 24px; font-size: 19.700px; font-weight: 400; }
.tr .id .mark { width: 35px; height: 30px; margin-right: 12px; }
.tr .rail .on { height: 36px; margin: 7px 0 11px; }
.tr .rail .on svg { height: 23px; }
.train { padding: 30px 0 0 29px; width: 1232px; }
.hd { display: flex; justify-content: space-between; height: 52px; }
.hd h2 { margin-left: -3px; }
.btns { display: flex; gap: 13px; padding-top: 12.500px; font-size: 15.300px; text-align: center; line-height: 36px; }
.btns span { height: 39px; border-radius: 3px; }
.fill { width: 171px; background: #7cacff; border-bottom: 3px solid #3e93e4; color: #fff; }
.line { width: 150px; background: #fff; border: 1.500px solid #6ba8f0; border-bottom: 3px solid #4896e8; color: #6ea6f5; }
.tabline { display: flex; gap: 28px; height: 40px; line-height: 38px; font-size: 15px; font-weight: 600; border-bottom: 1.500px solid #e2e5eb; }
.tabline span { height: 40px; }
.tabline .on { padding-right: 3px; margin-right: -3px; padding-left: 1px; color: #47a7df; border-bottom: 2px solid #6cbcea; }
.fl { display: flex; align-items: center; height: 37px; margin: 19px 0 10px; }
.fl label { padding-left: 1px; }
.fl .ctl { width: 198px; height: 37px; margin: 0 24px 0 12px; padding: 0 13px; display: flex; align-items: center; justify-content: space-between; }
.fl .ctl.ph { margin-left: 11px; padding-left: 21px; }
.hint { display: flex; align-items: center; height: 48px; margin-left: 2px; padding: 0 18px 0 17px; background: #e9f6fe; border: 1px solid #d5e3ec; border-bottom: 3px solid #cdd9e1; border-radius: 3px; font-size: 14px; }
.hint svg { color: #bcc8d2; margin-right: 14px; }
.hint b { margin-left: auto; font-weight: 400; color: #8292a2; }
.train a { color: #40a3da; }
.cap { margin: 9px 0 11px 4px; line-height: 20px; }
.cap.all { margin: 25.500px 0 18.500px 4px; }
.train .sheet { margin-left: 2px; }
.train .one { height: 155px; border-bottom: 3px solid #d6dade; }
.st { display: flex; padding-left: 34px; }
.many { padding-top: 8.400px; height: 245.500px; border-bottom: 1.500px solid #e9ecef; color: #b4bfcc; }
.st h4 { font-size: 13px; font-weight: 600; letter-spacing: .12px; color: #8291a7; line-height: 24px; display: flex; align-items: center; }
.st h4 i { width: 15px; height: 15px; margin-left: 7px; border-radius: 50%; background: #dadde3; color: #fff; font-size: 11px; line-height: 15px; text-align: center; font-weight: 700; }
.c1 { width: 190.500px; padding-top: 14px; }
.c2 { width: 251px; padding-top: 12px; }
.c3 { width: 254px; padding-top: 14px; }
.c4 { width: 186px; padding-top: 17px; }
.c5 { padding-top: 18px; }
.c2 h4, .c3 h4 { margin-bottom: 6px; }
.c4 h4 { margin-bottom: 5px; }
.c5 h4 { margin-bottom: 4px; }
.c5 h4 i { position: relative; top: 10px; }
.st strong { display: block; font-size: 18px; font-weight: 700; color: #111; line-height: 24px; margin-top: 1px; }
.guide { display: block; width: 176px; height: 31px; margin: 32px 0 0 -1px; text-align: center; line-height: 28px; font-size: 12.300px; color: #80b1f0; border: 1.500px solid #79afef; border-bottom: 2.500px solid #5c9ee9; border-radius: 3px; }
.st u { color: #e69c57; }
.st s { color: #2ad3c3; }

.persona { padding: 41px 0 0 74px; width: 1183px; }
.persona h2 { margin: 0 0 15.500px -1px; }
.pc { display: flex; background: #fff; border: 1px solid #eceef1; border-bottom: 3px solid #d9dcdf; border-radius: 3px; margin-bottom: 23px; padding: 27px 25px 25px 23px; }
.persona h5 { font-size: 11px; line-height: 16px; color: #a9bbc4; }
.persona h3 { font-size: 18px; font-weight: 600; line-height: 24px; margin: 10px 0 28px; }
.l { width: 296px; padding-right: 18px; }
.pills { display: flex; flex-wrap: wrap; gap: 6px 7px; margin-top: 10px; padding-bottom: 0; }
.pills span { height: 30px; padding: 0 12px; border-radius: 14px; background: #e8f5fe; color: #304a6a; font-size: 12px; line-height: 30px; }
.r { flex: 1; }
.r h5, .r p { padding-left: 13px; }
.r p { padding-top: 12px; padding-bottom: 12px; border-bottom: 1px solid #e6e9ec; }
.r h5 + p { padding-top: 10px; }
.r p:last-child { border: 0; padding-bottom: 0; }
```
